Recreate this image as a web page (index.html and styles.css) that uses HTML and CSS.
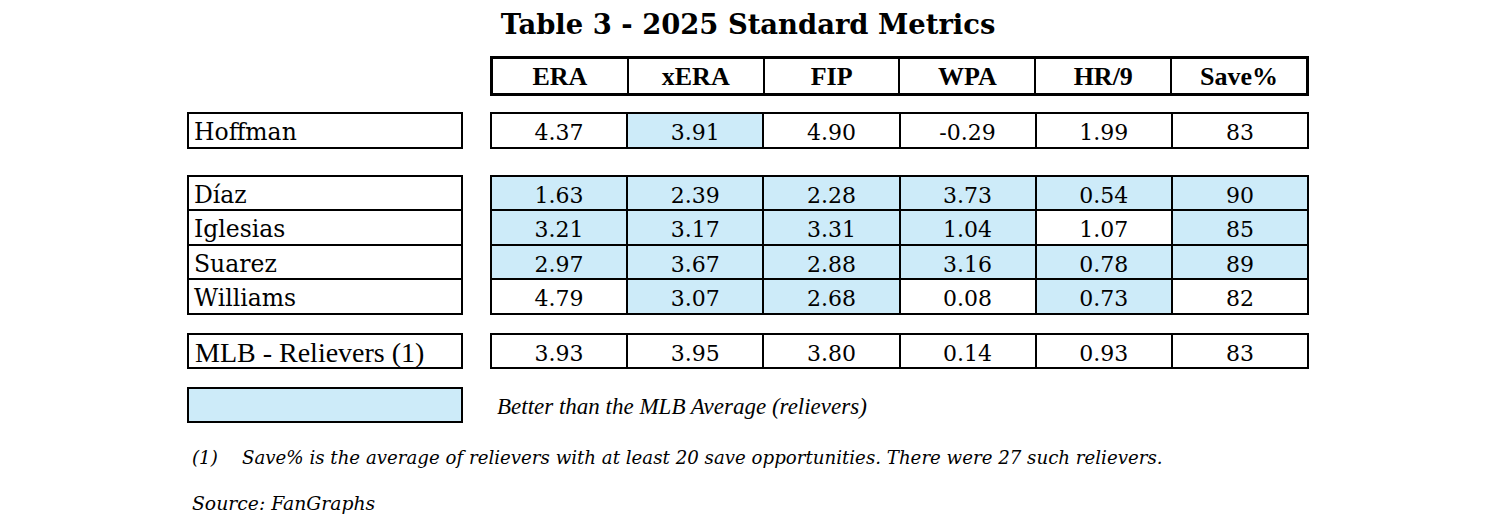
FILE: index.html
```html
<!DOCTYPE html>
<html lang="en">
<head>
<meta charset="utf-8">
<title>Table 3 - 2025 Standard Metrics</title>
<link rel="stylesheet" href="styles.css">
</head>
<body>
<div class="page">
  <h1 class="title">Table 3 - 2025 Standard Metrics</h1>

  <div class="block block-head">
    <div class="names-spacer"></div>
    <div class="grid head">
      <div class="cell">ERA</div>
      <div class="cell">xERA</div>
      <div class="cell">FIP</div>
      <div class="cell">WPA</div>
      <div class="cell">HR/9</div>
      <div class="cell">Save%</div>
    </div>
  </div>

  <div class="block block-hoffman">
    <div class="names">
      <div class="name">Hoffman</div>
    </div>
    <div class="grid">
      <div class="cell">4.37</div>
      <div class="cell hi">3.91</div>
      <div class="cell">4.90</div>
      <div class="cell">-0.29</div>
      <div class="cell">1.99</div>
      <div class="cell">83</div>
    </div>
  </div>

  <div class="block block-group">
    <div class="names">
      <div class="name">Díaz</div>
      <div class="name">Iglesias</div>
      <div class="name">Suarez</div>
      <div class="name">Williams</div>
    </div>
    <div class="grid">
      <div class="cell hi">1.63</div>
      <div class="cell hi">2.39</div>
      <div class="cell hi">2.28</div>
      <div class="cell hi">3.73</div>
      <div class="cell hi">0.54</div>
      <div class="cell hi">90</div>

      <div class="cell hi">3.21</div>
      <div class="cell hi">3.17</div>
      <div class="cell hi">3.31</div>
      <div class="cell hi">1.04</div>
      <div class="cell">1.07</div>
      <div class="cell hi">85</div>

      <div class="cell hi">2.97</div>
      <div class="cell hi">3.67</div>
      <div class="cell hi">2.88</div>
      <div class="cell hi">3.16</div>
      <div class="cell hi">0.78</div>
      <div class="cell hi">89</div>

      <div class="cell">4.79</div>
      <div class="cell hi">3.07</div>
      <div class="cell hi">2.68</div>
      <div class="cell">0.08</div>
      <div class="cell hi">0.73</div>
      <div class="cell">82</div>
    </div>
  </div>

  <div class="block block-mlb">
    <div class="names">
      <div class="name name-mlb">MLB - Relievers (1)</div>
    </div>
    <div class="grid">
      <div class="cell">3.93</div>
      <div class="cell">3.95</div>
      <div class="cell">3.80</div>
      <div class="cell">0.14</div>
      <div class="cell">0.93</div>
      <div class="cell">83</div>
    </div>
  </div>

  <div class="legend">
    <div class="legend-swatch"></div>
    <div class="legend-text">Better than the MLB Average (relievers)</div>
  </div>

  <div class="footnote">
    <span class="fn-mark">(1)</span>
    <span class="fn-text">Save% is the average of relievers with at least 20 save opportunities. There were 27 such relievers.</span>
  </div>

  <div class="source">Source: FanGraphs</div>
</div>
</body>
</html>
```

FILE: styles.css
```css
html, body {
  margin: 0;
  padding: 0;
  background: #ffffff;
}

.page {
  width: 1500px;
  height: 529px;
  padding: 8px 0 0 187px;
  box-sizing: border-box;
  display: flex;
  flex-direction: column;
  color: #000;
  font-family: "DejaVu Serif", "Liberation Serif", serif;
}

.title {
  margin: 0 0 16px 0;
  width: 1122px;
  text-align: center;
  font-family: "DejaVu Serif", serif;
  font-weight: bold;
  font-size: 27.4px;
  line-height: 32px;
}

.block {
  display: flex;
  gap: 27px;
  align-items: flex-start;
}

.block-hoffman { margin-top: 16px; }
.block-group { margin-top: 26px; }
.block-mlb { margin-top: 18px; }

.names-spacer {
  width: 276px;
  flex: none;
}

.names {
  width: 276px;
  flex: none;
  box-sizing: border-box;
  background: #000;
  padding: 2px;
  display: grid;
  grid-auto-rows: 32.5px;
  row-gap: 2px;
}

.name {
  background: #fff;
  padding: 0 5px;
  font-size: 23.5px;
  line-height: 36px;
  white-space: nowrap;
  overflow: hidden;
}

.name.name-mlb {
  padding-left: 6px;
  font-family: "Liberation Serif", serif;
  font-size: 28px;
  line-height: 35px;
}

.grid {
  width: 819px;
  flex: none;
  box-sizing: border-box;
  background: #000;
  padding: 2px;
  display: grid;
  grid-template-columns: repeat(6, 1fr);
  grid-auto-rows: 32.5px;
  gap: 2px;
}

.cell {
  background: #fff;
  text-align: center;
  font-size: 22px;
  line-height: 37px;
  overflow: hidden;
}

.cell.hi {
  background: #cdebf9;
}

.grid.head {
  padding: 3px;
  grid-auto-rows: 34px;
}

.grid.head .cell {
  font-family: "Liberation Serif", serif;
  font-weight: bold;
  font-size: 26px;
  line-height: 36px;
}

.legend {
  margin-top: 18px;
  display: flex;
  align-items: center;
  gap: 34px;
}

.legend-swatch {
  width: 276px;
  height: 36px;
  box-sizing: border-box;
  border: 2px solid #000;
  background: #cdebf9;
}

.legend-text {
  font-family: "Liberation Serif", serif;
  font-style: italic;
  font-size: 23px;
  line-height: 26px;
  padding-top: 4px;
}

.footnote {
  margin-top: 23px;
  padding-left: 5px;
  display: flex;
  font-style: italic;
  font-size: 18.2px;
  line-height: 24px;
}

.fn-mark {
  width: 50px;
  flex: none;
}

.source {
  margin-top: 22px;
  padding-left: 5px;
  font-style: italic;
  font-size: 18.8px;
  line-height: 24px;
}
```
